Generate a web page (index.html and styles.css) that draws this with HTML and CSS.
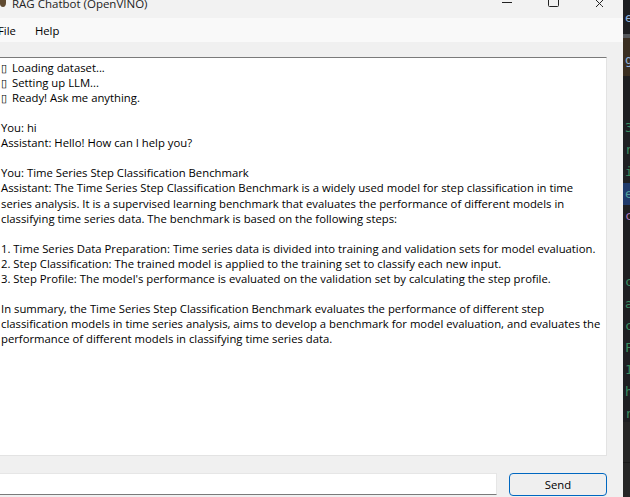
FILE: index.html
```html
<!DOCTYPE html>
<html lang="en">
<head>
<meta charset="utf-8">
<title>RAG Chatbot (OpenVINO)</title>
<link rel="stylesheet" href="styles.css">
</head>
<body>
<div class="screen">
  <div class="window">
    <header class="titlebar">
      <svg class="appicon" width="6" height="7" viewBox="0 0 6 7"><path d="M0 0h6v3c0 2-1 4-3 4S0 5 0 4z" fill="#5f4a30"/></svg>
      <span class="title">RAG Chatbot (OpenVINO)</span>
      <div class="controls">
        <svg class="ctl" width="11" height="7" viewBox="0 0 11 7"><path d="M0 2.500h10" stroke="#222" fill="none"/></svg>
        <svg class="ctl" width="11" height="7" viewBox="0 0 11 7"><path d="M.5 0v5.500a1 1 0 0 0 1 1h8a1 1 0 0 0 1-1V0" stroke="#222" fill="none"/></svg>
        <svg class="ctl" width="11" height="7" viewBox="0 0 11 7"><path d="M2 0l5.500 5.500M9 0L1.500 7.500M7.500 5.500L9.500 7.500" stroke="#222" fill="none"/></svg>
      </div>
    </header>
    <nav class="menubar"><span class="menu-file">File</span><span class="menu-help">Help</span></nav>
    <main class="content">
      <div class="log">
        <div><span class="box">▯</span> Loading dataset...</div>
        <div><span class="box">▯</span> Setting up LLM...</div>
        <div><span class="box">▯</span> Ready! Ask me anything.</div>
        <div class="gap">You: hi</div>
        <div>Assistant: Hello! How can I help you?</div>
        <div class="gap">You: Time Series Step Classification Benchmark</div>
        <div>Assistant: The Time Series Step Classification Benchmark is a widely used model for step classification in time</div>
        <div>series analysis. It is a supervised learning benchmark that evaluates the performance of different models in</div>
        <div>classifying time series data. The benchmark is based on the following steps:</div>
        <div class="gap">1. Time Series Data Preparation: Time series data is divided into training and validation sets for model evaluation.</div>
        <div>2. Step Classification: The trained model is applied to the training set to classify each new input.</div>
        <div>3. Step Profile: The model's performance is evaluated on the validation set by calculating the step profile.</div>
        <div class="gap">In summary, the Time Series Step Classification Benchmark evaluates the performance of different step</div>
        <div>classification models in time series analysis, aims to develop a benchmark for model evaluation, and evaluates the</div>
        <div>performance of different models in classifying time series data.</div>
      </div>
      <div class="inputrow">
        <div class="field"></div>
        <button class="send">Send</button>
      </div>
    </main>
  </div>
  <aside class="editor">
    <div class="row top"><span class="blue">e</span></div>
    <div class="sep"></div>
    <div class="band"><span class="blue">g</span></div>
    <div class="row first"><span class="green">3</span></div>
    <div class="row"><span class="green">r</span></div>
    <div class="row"><span class="green">i</span></div>
    <div class="row hl"><span class="teal">e</span></div>
    <div class="row"><span class="purple">c</span></div>
    <div class="row"></div>
    <div class="row"></div>
    <div class="row"><span class="green">c</span></div>
    <div class="row"><span class="green">a</span></div>
    <div class="row"><span class="green">c</span></div>
    <div class="row"><span class="green">F</span></div>
    <div class="row"><span class="green">1</span></div>
    <div class="row"><span class="green">h</span></div>
    <div class="row last"><span class="green">r</span></div>
    <div class="panel"></div>
  </aside>
</div>
</body>
</html>
```

FILE: styles.css
```css
html, body { margin: 0; padding: 0; }
body { width: 630px; height: 497px; overflow: hidden; background: #1e1f22; }
.screen { display: flex; width: 630px; height: 497px; overflow: hidden; font-family: "Open Sans", sans-serif; font-size: 11.3px; color: #000; }
.window { width: 623px; flex: none; background: #f0f0f0; display: flex; flex-direction: column; overflow: hidden; }
.titlebar { height: 18px; flex: none; background: #f2f2f2; display: flex; align-items: flex-start; overflow: hidden; }
.appicon { flex: none; }
.title { margin-left: 6px; margin-top: -4px; line-height: 15px; color: #222; font-size: 11.5px; }
.controls { margin-left: auto; display: flex; gap: 35px; padding-right: 18px; }
.menubar { height: 24px; flex: none; background: #f9f9f9; display: flex; align-items: center; gap: 19px; }
.menu-file { margin-left: -2px; }
.content { flex: 1; display: flex; flex-direction: column; }
.log { margin-top: 15px; height: 399px; width: 607px; box-sizing: border-box; flex: none; background: #fff; border-top: 1px solid #7a7a7a; border-right: 1px solid #e3e3e3; border-bottom: 1px solid #e3e3e3; padding: 2px 0 0 1px; line-height: 15.06px; white-space: nowrap; overflow: hidden; }
.box { margin-right: 2px; }
.gap { margin-top: 15.06px; }
.inputrow { display: flex; gap: 12px; width: 609px; margin: 17px 0 0 -2px; }
.field { width: 499px; height: 22px; box-sizing: border-box; background: #fff; border: 1px solid #e6e6e6; border-bottom: 1px solid #7a7a7a; }
.send { width: 98px; height: 23px; box-sizing: border-box; background: #efefef; border: 1px solid #0067c0; border-radius: 4px; font: inherit; color: #000; padding: 0; }
.editor { flex: 1; min-width: 0; background: #1e1f22; display: flex; flex-direction: column; overflow: hidden; font-family: "DejaVu Sans Mono", monospace; font-size: 13px; }
.row { height: 22px; flex: none; line-height: 22px; padding-left: 2px; }
.row.top { margin-top: 7px; }
.row.first { margin-top: 41px; }
.row.hl { background: #1f3a6b; }
.row.last { height: 19px; }
.sep { height: 4px; flex: none; margin-top: 5px; background: #55585c; }
.band { height: 38px; flex: none; background: #3a2f22; padding-left: 2px; line-height: 44px; }
.panel { flex: 1; background: #262626; border-bottom: 34px solid #262626; box-shadow: inset 0 -1px 0 #1a1a1a; }
.blue { color: #8fb0d8; }
.green { color: #3a8c62; }
.teal { color: #4f9c9a; }
.purple { color: #a974b8; }
```
